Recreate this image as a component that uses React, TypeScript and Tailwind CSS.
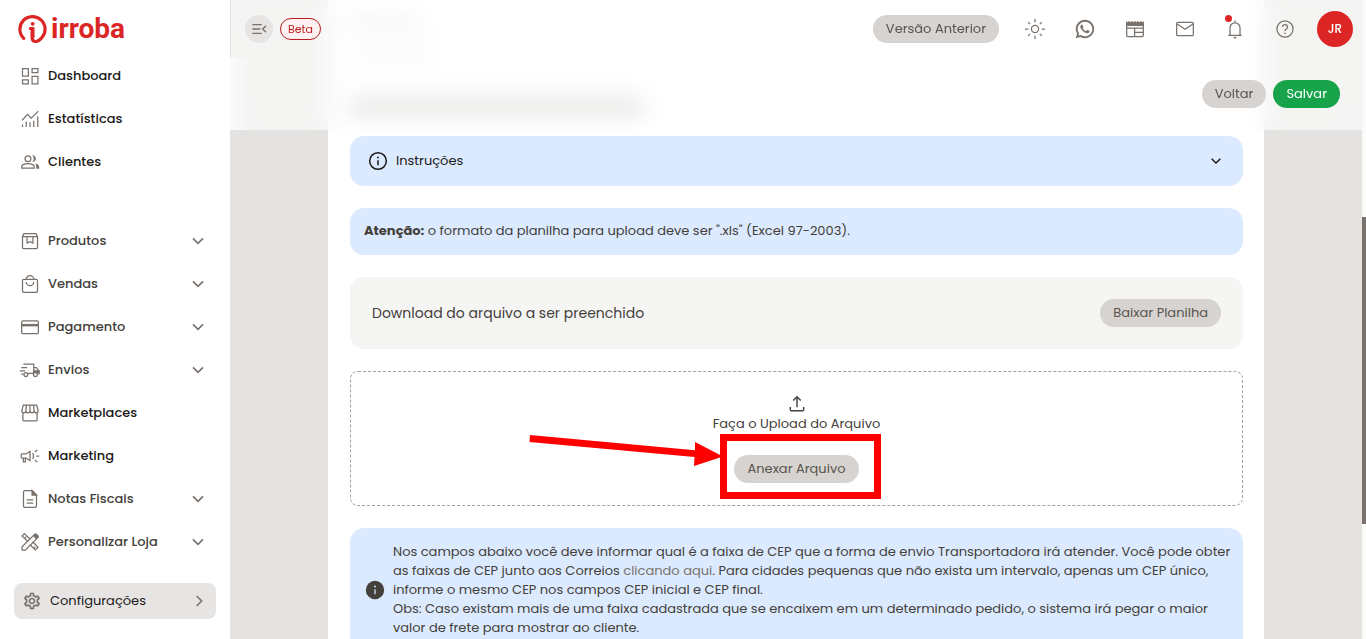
import type { ReactNode } from 'react';
import { MdOutlineSettings } from 'react-icons/md';
import { RiWhatsappLine } from 'react-icons/ri';

function Icon({ children, className = 'size-5' }: { children: ReactNode; className?: string }) {
  return (
    <svg
      viewBox="0 0 24 24"
      fill="none"
      stroke="currentColor"
      strokeWidth="1.5"
      aria-hidden="true"
      className={`shrink-0 ${className}`}
    >
      {children}
    </svg>
  );
}

const DashboardIcon = () => (
  <Icon>
    <path d="M3 3h7v9H3zM14.5 3h7v5h-7zM14.5 12.5h7v9h-7zM3 16.500h7v5H3z" />
  </Icon>
);

const ChartIcon = () => (
  <Icon>
    <path d="M2.500 13.500 9 6.500l4.500 4.500L22 2.500" />
    <path d="M3 18.500v3M7.500 15v6.500M12 16v5.500M16.500 14v7.500M21.300 9v12.500" />
  </Icon>
);

const PeopleIcon = () => (
  <Icon>
    <circle cx="9.500" cy="8" r="3.500" />
    <path d="M2 19.200v-1.500c0-1.200.7-2.100 1.800-2.600 3.600-1.600 7.800-1.600 11.400 0 1.100.5 1.800 1.400 1.800 2.600v1.500z" />
    <path
      d="M14.500 12a5 5 0 0 0 0-8c3 0 4.500 2 4.500 4s-1.500 4-4.500 4zM18 13.800c2.700.5 5 1.600 5 3.900V20h-3.500v-2.500c0-1.500-.5-2.700-1.500-3.700z"
      fill="currentColor"
      stroke="none"
    />
  </Icon>
);

const BoxIcon = () => (
  <Icon>
    <path d="M3 6.500 4.800 3.200h14.400L21 6.500v13.200c0 .7-.6 1.300-1.300 1.300H4.300C3.600 21 3 20.400 3 19.700zM3 6.700h18" />
    <path d="M8.500 6.700v7.800l3.500-1.800 3.500 1.800V6.700" />
  </Icon>
);

const BagIcon = () => (
  <Icon>
    <rect x="3" y="6.500" width="18" height="15.500" rx="1.500" />
    <path d="M7.500 6.500a4.500 4.500 0 0 1 9 0M7.500 9.500a4.500 4.500 0 0 0 9 0" />
  </Icon>
);

const CardIcon = () => (
  <Icon>
    <rect x="2" y="4.500" width="20" height="15.500" rx="1.500" />
    <path d="M2 9.800h20" strokeWidth="3" />
  </Icon>
);

const TruckIcon = () => (
  <Icon className="h-5 w-5 overflow-visible">
    <path d="M4 5h12.500v11H9.500M16.500 9h3.300l3 4v3.500h-1M1.500 9h7M0 13h6M1.500 17h2.500" />
    <path d="M16.500 13h6.300v2.500h-6.300z" fill="currentColor" />
    <circle cx="7" cy="17.500" r="2.300" />
    <circle cx="18.500" cy="17.500" r="2.300" fill="white" />
  </Icon>
);

const StoreIcon = () => (
  <Icon>
    <path d="M4 2.500h16l1.700 6.300c.4 1.500-.7 2.900-2.200 2.900-1.500 0-2.500-1.100-2.500-2.500 0 1.400-1.100 2.500-2.500 2.500S12 10.600 12 9.200c0 1.400-1.100 2.500-2.500 2.500S7 10.600 7 9.200c0 1.400-1 2.500-2.500 2.500S1.900 10.300 2.300 8.800zM7.800 2.500 7 9.200M12 2.500v6.700M16.200 2.500 17 9.200" />
    <path d="M3.500 11.500v9c0 .6.400 1 1 1h15c.6 0 1-.4 1-1v-9" />
  </Icon>
);

const CampaignIcon = () => (
  <Icon>
    <path d="M2.500 9.500H7l5-3v11l-5-3H2.500c-.6 0-1-.4-1-1v-3c0-.6.4-1 1-1zM4 14.500v4.500h2.500v-4.500M15 8.500c1.600 1.800 1.600 5.200 0 7" />
    <path d="M19.500 12H23M17.800 7l3-2.300M17.800 17l3 2.300" />
  </Icon>
);

const DocumentIcon = () => (
  <Icon>
    <path d="M14.500 2H5.800C4.900 2 4.200 2.700 4.200 3.600v16.800c0 .9.700 1.600 1.600 1.600h12.400c.9 0 1.600-.7 1.600-1.600V7.300z" />
    <path d="M14.500 2v5.300h5.300z" fill="currentColor" />
    <path d="M8 13h8M8 17h8" />
  </Icon>
);

const DesignIcon = () => (
  <Icon>
    <path d="M9.500 11.500 2.500 4.800 5.300 2l7 6.800M15 11.700l6.700 6.500-3.300 3.300L11.700 15M5.500 7.500l2-2M16.500 19.500l2-2" />
    <path d="M2.500 21.700v-3.900L17.800 2.500l3.900 3.900L6.400 21.700z" />
    <path d="m15.500 4.800 2.800-2.800c.5-.5 1.200-.5 1.700 0l2.200 2.200c.5.500.5 1.200 0 1.700l-2.800 2.800z" fill="currentColor" stroke="none" />
  </Icon>
);

const ChevronDown = ({ className = 'size-4' }: { className?: string }) => (
  <Icon className={className}>
    <path d="m4.500 8 7.500 7.500L19.500 8" strokeWidth="2.500" />
  </Icon>
);

const ChevronRight = () => (
  <Icon className="size-4">
    <path d="m7 4.500 7.500 7.500L7 19.500" strokeWidth="2.300" />
  </Icon>
);

type Item = { label: string; icon: ReactNode; expandable?: boolean };

const overview: Item[] = [
  { label: 'Dashboard', icon: <DashboardIcon /> },
  { label: 'Estatísticas', icon: <ChartIcon /> },
  { label: 'Clientes', icon: <PeopleIcon /> },
];

const sections: Item[] = [
  { label: 'Produtos', icon: <BoxIcon />, expandable: true },
  { label: 'Vendas', icon: <BagIcon />, expandable: true },
  { label: 'Pagamento', icon: <CardIcon />, expandable: true },
  { label: 'Envios', icon: <TruckIcon />, expandable: true },
  { label: 'Marketplaces', icon: <StoreIcon /> },
  { label: 'Marketing', icon: <CampaignIcon /> },
  { label: 'Notas Fiscais', icon: <DocumentIcon />, expandable: true },
  { label: 'Personalizar Loja', icon: <DesignIcon />, expandable: true },
];

function NavItem({ label, icon, expandable }: Item) {
  const shared = 'flex h-[43px] w-full items-center gap-2 pr-6 pl-5 text-left text-[13px] font-medium';
  return (
    <li>
      {expandable ? (
        <button type="button" aria-expanded="false" className={`${shared} text-stone-700`}>
          <span className="text-stone-500">{icon}</span>
          <span className="flex-1">{label}</span>
          <ChevronDown className="size-4 text-stone-500" />
        </button>
      ) : (
        <a href="#" className={`${shared} text-stone-900`}>
          <span className="text-stone-500">{icon}</span>
          {label}
        </a>
      )}
    </li>
  );
}

function Logo() {
  return (
    <a href="#" aria-label="irroba" className="ml-[18px] flex h-[54px] items-center gap-[3px] pt-[3px] text-[#dc2626]">
      <svg viewBox="0 0 30 30" fill="none" stroke="currentColor" aria-hidden="true" className="size-[30px] shrink-0">
        <path
          d="M5.700 24.300A12.600 12.600 0 1 1 24 23.500c-2.200 2.700-5.200 4.500-7.700 3.800-1.700-.5-2.200-1.900-2.200-3.800V14.500h-1.800"
          strokeWidth="3.200"
          strokeLinecap="round"
        />
        <path d="M15.800 14v9.500" strokeWidth="1.500" strokeLinecap="round" />
        <circle cx="14.700" cy="9.800" r="1.900" fill="currentColor" stroke="none" />
      </svg>
      <span className="font-['Roboto',sans-serif] text-[28px] leading-8 font-bold">irroba</span>
    </a>
  );
}

function Sidebar() {
  return (
    <aside className="flex w-[230px] shrink-0 flex-col bg-white">
      <Logo />
      <nav>
        <ul>
          {overview.map((item) => (
            <NavItem key={item.label} {...item} />
          ))}
        </ul>
        <ul className="mt-9">
          {sections.map((item) => (
            <NavItem key={item.label} {...item} />
          ))}
        </ul>
        <button
          type="button"
          className="mx-[14px] mt-5 flex h-9 w-[202px] items-center gap-2 rounded-lg bg-stone-200 px-2 text-left text-[13px] text-stone-900"
        >
          <MdOutlineSettings className="size-5 text-stone-500" />
          <span className="flex-1">Configurações</span>
          <span className="text-stone-500">
            <ChevronRight />
          </span>
        </button>
      </nav>
    </aside>
  );
}

function Pill({ children, tone = 'neutral' }: { children: ReactNode; tone?: 'neutral' | 'success' }) {
  const colors = tone === 'success' ? 'bg-[#16a34a] text-white' : 'bg-stone-300 text-stone-600';
  return (
    <button type="button" className={`h-7 rounded-full px-[13px] text-[13px] whitespace-nowrap ${colors}`}>
      {children}
    </button>
  );
}

function IconButton({ label, children }: { label: string; children: ReactNode }) {
  return (
    <button type="button" aria-label={label} className="relative flex size-7 items-center justify-center text-stone-500">
      {children}
    </button>
  );
}

function TopBar() {
  return (
    <div className="flex h-[58px] items-center border-l border-stone-200 pr-[9px] pl-[14px]">
      <button
        type="button"
        aria-label="Recolher menu"
        className="flex size-7 items-center justify-center rounded-full bg-stone-200 text-stone-500"
      >
        <Icon className="size-4">
          <path d="M2 5.500h14M2 12h12M2 18.500h14M22.500 7 17.500 12l5 5" strokeWidth="2" />
        </Icon>
      </button>
      <span className="ml-[7px] flex h-[22px] items-center rounded-full border border-[#b91c1c] bg-red-50 px-[7px] text-[11px] text-[#b91c1c]">
        Beta
      </span>
      <div className="ml-auto flex items-center gap-[22px]">
        <Pill>Versão Anterior</Pill>
        <IconButton label="Tema">
          <Icon>
            <circle cx="12" cy="12" r="4.300" />
            <path d="M12 0v4M12 20v4M0 12h4M20 12h4M3.800 3.800l2.300 2.300M17.900 17.900l2.300 2.300M3.800 20.200l2.300-2.300M17.900 6.100l2.300-2.300" />
          </Icon>
        </IconButton>
        <IconButton label="WhatsApp">
          <RiWhatsappLine className="size-[22px]" />
        </IconButton>
        <IconButton label="Notícias">
          <Icon>
            <path d="M2 5.500v14c0 .8.600 1.500 1.500 1.500h17c.8 0 1.500-.7 1.500-1.500v-14M2 11h20M11.500 11v10M11.500 16H22" />
            <path
              d="M1.300 2.500 3 4l1.800-1.500L6.600 4l1.800-1.500L10.200 4 12 2.500 13.800 4l1.800-1.500L17.400 4l1.800-1.500L21 4l1.700-1.500v5.800H1.300z"
              fill="currentColor"
              stroke="none"
            />
          </Icon>
        </IconButton>
        <IconButton label="Mensagens">
          <Icon>
            <rect x="2" y="4" width="20" height="16" rx="1.500" />
            <path d="m2.500 6 9.500 6.300L21.500 6" />
          </Icon>
        </IconButton>
        <IconButton label="Notificações">
          <Icon>
            <path d="M4 19.500h16M6 19.500V10.500a6 6 0 0 1 12 0v9M12 4V1.800" />
            <path d="M10 21.500h4a2 2 0 0 1-4 0z" fill="currentColor" stroke="none" />
          </Icon>
          <span className="absolute top-0 left-1 size-[7px] rounded-full bg-[#dc2626]" />
        </IconButton>
        <IconButton label="Ajuda">
          <Icon>
            <circle cx="12" cy="12" r="9.700" />
            <path d="M9 9.600c0-1.700 1.300-2.900 3-2.900s3 1.200 3 2.800c0 2.300-3 2.500-3 5" />
            <circle cx="12" cy="17.200" r="1" fill="currentColor" stroke="none" />
          </Icon>
        </IconButton>
        <button type="button" className="-ml-1 size-9 rounded-full bg-[#dc2626] text-xs font-medium text-white">
          JR
        </button>
      </div>
    </div>
  );
}

function Header() {
  return (
    <header className="absolute inset-x-0 top-0 z-10 bg-white/60 backdrop-blur-md">
      <TopBar />
      <div className="flex h-[72px] items-center justify-end gap-[7px] bg-linear-to-r from-white/60 to-transparent to-2% pr-[22px]">
        <Pill>Voltar</Pill>
        <Pill tone="success">Salvar</Pill>
      </div>
    </header>
  );
}

// Breadcrumb and title placeholders that slide under the translucent header.
function ScrolledHeading() {
  return (
    <div aria-hidden="true" className="flex h-[114px] shrink-0 flex-col items-start pt-[14px]">
      <div className="h-4 w-[70px] bg-stone-200" />
      <div className="mt-[18px] ml-2 h-3 w-[72px] bg-stone-200" />
      <div className="mt-10 h-4 w-[292px] bg-stone-400/80" />
    </div>
  );
}

// Red frame and arrow that point at the attach button.
function AttachHighlight() {
  return (
    <svg
      viewBox="0 0 354 68"
      aria-hidden="true"
      className="pointer-events-none absolute top-[60px] left-1/2 -ml-[268px] h-[68px] w-[354px]"
    >
      <rect x="194.500" y="5.500" width="154" height="58" fill="none" stroke="#ff0000" strokeWidth="7" />
      <path d="M1 3 166 18.200V10l28 14.500-29 9.500.5-9L.5 10z" fill="#ff0000" />
    </svg>
  );
}

function Content() {
  return (
    <div className="mx-auto flex h-full w-full max-w-[936px] flex-col bg-white pr-[21px] pl-[22px] text-[13px] text-stone-700">
      <ScrolledHeading />
      <div className="mt-[22px] flex shrink-0 flex-col gap-[22px]">
        <button
          type="button"
          aria-expanded="false"
          className="flex h-[50px] items-center gap-2 rounded-[14px] bg-blue-100 pr-5 pl-[18px] text-left text-stone-900"
        >
          <Icon>
            <circle cx="12" cy="12" r="10" strokeWidth="1.800" />
            <path d="M12 11v6" strokeWidth="1.800" />
            <circle cx="12" cy="7.800" r="1.100" fill="currentColor" stroke="none" />
          </Icon>
          <span className="flex-1">Instruções</span>
          <ChevronDown className="size-[14px]" />
        </button>

        <p className="h-[47px] rounded-[14px] bg-blue-100 px-[14px] pt-[13px] leading-5">
          <strong className="font-bold">Atenção:</strong> o formato da planilha para upload deve ser ".xls" (Excel
          97-2003).
        </p>

        <section className="flex h-[72px] items-center justify-between rounded-[14px] bg-stone-100 px-[22px]">
          <h2 className="text-sm">Download do arquivo a ser preenchido</h2>
          <Pill>Baixar Planilha</Pill>
        </section>

        <section className="relative flex h-[135px] flex-col items-center rounded-lg border border-dashed border-stone-400 pt-[22px]">
          <Icon>
            <path
              d="M12 16V3.500M7.500 7.800 12 3.300l4.500 4.500M4 15.500v3.300c0 .7.500 1.200 1.200 1.200h13.600c.7 0 1.200-.5 1.200-1.200v-3.300"
              strokeWidth="1.700"
            />
          </Icon>
          <p className="mb-[21px] leading-5">Faça o Upload do Arquivo</p>
          <Pill>Anexar Arquivo</Pill>
          <AttachHighlight />
        </section>

        <section className="flex items-center gap-2 rounded-[14px] bg-blue-100 py-[14px] pr-2 pl-[15px] leading-[19px]">
          <Icon>
            <circle cx="12" cy="12" r="11" fill="currentColor" stroke="none" />
            <path d="M12 11v6" stroke="#dbeafe" />
            <circle cx="12" cy="7.800" r="1.100" fill="#dbeafe" stroke="none" />
          </Icon>
          <p>
            Nos campos abaixo você deve informar qual é a faixa de CEP que a forma de envio Transportadora irá atender.
            Você pode obter as faixas de CEP junto aos Correios{' '}
            <a href="#" className="text-stone-500">
              clicando aqui
            </a>
            . Para cidades pequenas que não exista um intervalo, apenas um CEP único, informe o mesmo CEP nos campos CEP
            inicial e CEP final.
            <br />
            Obs: Caso existam mais de uma faixa cadastrada que se encaixem em um determinado pedido, o sistema irá pegar
            o maior valor de frete para mostrar ao cliente.
          </p>
        </section>
      </div>
    </div>
  );
}

export default function App() {
  return (
    <div className="flex h-screen overflow-hidden bg-white font-['Poppins','Inter',sans-serif]">
      <Sidebar />
      <main className="relative min-w-0 flex-1 overflow-hidden bg-[#e4e3e1]">
        <Content />
        <Header />
      </main>
      <div aria-hidden="true" className="flex w-1 shrink-0 flex-col bg-stone-50">
        <div className="h-[34%]" />
        <div className="h-[48%] bg-stone-500" />
      </div>
    </div>
  );
}
